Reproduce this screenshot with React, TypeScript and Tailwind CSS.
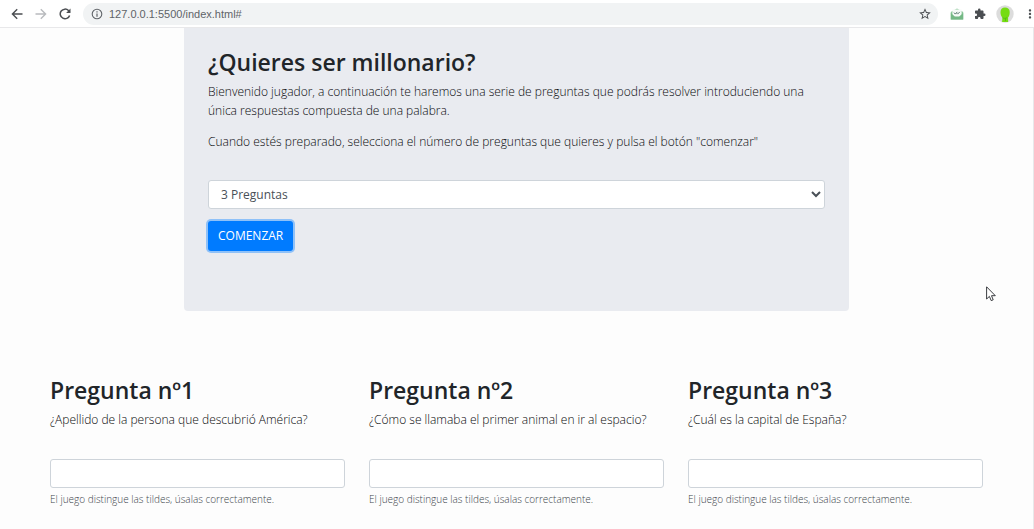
import React from "react";
import { MdExtension, MdMoreVert, MdStarBorder } from "react-icons/md";

type Question = { id: number; text: string };

const questions: Question[] = [
  { id: 1, text: "¿Apellido de la persona que descubrió América?" },
  { id: 2, text: "¿Cómo se llamaba el primer animal en ir al espacio?" },
  { id: 3, text: "¿Cuál es la capital de España?" },
];

function ArrowIcon({ className }: { className: string }) {
  return (
    <svg viewBox="0 0 12 12" className={className} fill="none" stroke="currentColor" strokeWidth="1.4">
      <path d="M11.5 6H1.5M6.2 1.2 1.4 6l4.8 4.8" />
    </svg>
  );
}

function ReloadIcon() {
  return (
    <svg viewBox="0 0 12 12" className="size-3" fill="none" stroke="currentColor" strokeWidth="1.5">
      <path d="M10.6 7.4A4.8 4.8 0 1 1 9.5 2.6L10.7 4" />
      <path d="M11.5 0.6V5H7.1Z" fill="currentColor" stroke="none" />
    </svg>
  );
}

function InfoIcon() {
  return (
    <svg viewBox="0 0 12 12" className="size-3 shrink-0 text-[#5f6368]" fill="none" stroke="currentColor">
      <circle cx="6" cy="6" r="4.8" strokeWidth="1.1" />
      <path d="M6 5.4V8.8M6 3.2V4.4" strokeWidth="1.2" />
    </svg>
  );
}

function MailIcon() {
  return (
    <svg viewBox="0 0 14 12" className="h-3 w-3.5">
      <path d="M0.8 4 7 0.6 13.2 4V11.6H0.8Z" fill="#8cc79a" />
      <path d="M2.4 1.6h9.2v6.2L9.4 9.2H4.6L2.4 7.8Z" fill="#f6fbf8" />
      <path d="M0.8 5 4.8 8.6h4.4L13.2 5V11.6H0.8Z" fill="#74b885" />
      <path d="m4 4.6 1.3 1.5 2-2.2M6.8 5.3l.8.8 2.2-2.2" fill="none" stroke="#4b6b61" strokeWidth="0.9" />
    </svg>
  );
}

function AvatarIcon() {
  return (
    <svg viewBox="0 0 18 18" className="size-[18px]">
      <circle cx="9" cy="9" r="8.7" fill="#dcdcdc" />
      <path d="M9 2.5C6 2.5 4.500 4.300 4.500 7c0 2.400.6 4.300 1.900 5.300L6.100 17h6V12.600C13.200 11.500 13.700 9.500 13.700 7 13.700 4.200 12 2.500 9 2.500Z" fill="#75dc12" />
      <path d="M6.400 12.600c1.400 1 3.200 1 4.700 0M9.500 13.200V16" fill="none" stroke="#4eb914" strokeWidth="0.8" />
    </svg>
  );
}

function Toolbar() {
  return (
    <header className="flex h-7 items-center border-b border-[#e8e8ea] bg-white pl-[11px]">
      <nav aria-label="Navegación" className="flex items-center gap-3 text-[#4b4e52]">
        <button type="button" aria-label="Atrás"><ArrowIcon className="size-3" /></button>
        <button type="button" aria-label="Adelante" className="text-[#b9bbbe]"><ArrowIcon className="size-3 rotate-180" /></button>
        <button type="button" aria-label="Recargar"><ReloadIcon /></button>
      </nav>
      <div className="ml-3 flex h-[22px] flex-1 items-center gap-1.5 rounded-full bg-[#f1f3f4] pr-1.5 pl-2">
        <InfoIcon />
        <input
          aria-label="Dirección"
          defaultValue="127.0.0.1:5500/index.html#"
          className="h-[22px] min-w-0 flex-1 bg-transparent font-['Liberation_Sans',sans-serif] text-[11px] text-[#5f6368] outline-none"
        />
        <button type="button" aria-label="Añadir a favoritos"><MdStarBorder className="size-3.5 text-[#4b4e52]" /></button>
      </div>
      <div className="ml-3 flex items-center gap-2.5">
        <button type="button" aria-label="Correo"><MailIcon /></button>
        <button type="button" aria-label="Extensiones"><MdExtension className="size-3 text-[#4b4e52]" /></button>
        <button type="button" aria-label="Perfil"><AvatarIcon /></button>
      </div>
      <button type="button" aria-label="Menú" className="ml-3 flex w-2 justify-center overflow-hidden">
        <MdMoreVert className="size-3.5 shrink-0 text-[#4b4e52]" />
      </button>
    </header>
  );
}

function StartPanel() {
  return (
    <section className="mx-auto w-full max-w-[665px] rounded-b bg-[#e9ebf0] px-6 pt-[19px] pb-[60px]">
      <h1 className="text-[23px] leading-[30px] font-semibold text-[#212529]">¿Quieres ser millonario?</h1>
      <p className="mt-[5px] leading-[19px]">
        Bienvenido jugador, a continuación te haremos una serie de preguntas que podrás resolver introduciendo una única
        respuestas compuesta de una palabra.
      </p>
      <p className="mt-3 leading-[19px]">
        Cuando estés preparado, selecciona el número de preguntas que quieres y pulsa el botón "comenzar"
      </p>
      <form className="mt-[29px]" onSubmit={(e) => e.preventDefault()}>
        <select
          aria-label="Número de preguntas"
          defaultValue="3"
          className="block h-[29px] w-full rounded-[3px] border border-[#ced4da] bg-white px-2 font-normal text-[#495057]"
        >
          <option value="3">3 Preguntas</option>
          <option value="5">5 Preguntas</option>
          <option value="10">10 Preguntas</option>
        </select>
        <button
          type="submit"
          className="mt-3 h-[30px] rounded-[3px] bg-[#007bff] px-2.5 font-normal text-white ring-2 ring-[#8fc1f8]"
        >
          COMENZAR
        </button>
      </form>
    </section>
  );
}

function QuestionCard({ id, text }: Question) {
  return (
    <article>
      <h2 className="text-[23px] leading-[30px] font-semibold text-[#212529]">Pregunta nº{id}</h2>
      <label htmlFor={`answer-${id}`} className="mt-[5px] block leading-[19px]">{text}</label>
      <input
        id={`answer-${id}`}
        type="text"
        aria-describedby={`hint-${id}`}
        className="mt-[30px] block h-[29px] w-full rounded-[3px] border border-[#ced4da] bg-white px-2.5"
      />
      <small id={`hint-${id}`} className="mt-1 block text-[10px] leading-[15px] text-[#40464c]">
        El juego distingue las tildes, úsalas correctamente.
      </small>
    </article>
  );
}

export default function App() {
  return (
    <div className="relative flex min-h-screen flex-col bg-[#fdfdfd] font-['Open_Sans','Noto_Sans',sans-serif] text-xs font-light text-[#08090b]">
      <Toolbar />
      <main className="flex-1 border-r border-[#e8e8ea]">
        <StartPanel />
        <div className="mt-16 grid grid-cols-3 gap-6 px-[50px]">
          {questions.map((q) => (
            <QuestionCard key={q.id} {...q} />
          ))}
        </div>
      </main>
      <svg viewBox="0 0 10 16" className="pointer-events-none absolute top-[286px] left-[986px] h-4 w-2.5" aria-hidden="true">
        <path d="M.6.8V13L3.4 10.4 5.2 14.6 7.2 13.8 5.5 9.7H9.3Z" fill="#fff" stroke="#25272b" strokeWidth="0.9" />
      </svg>
    </div>
  );
}
